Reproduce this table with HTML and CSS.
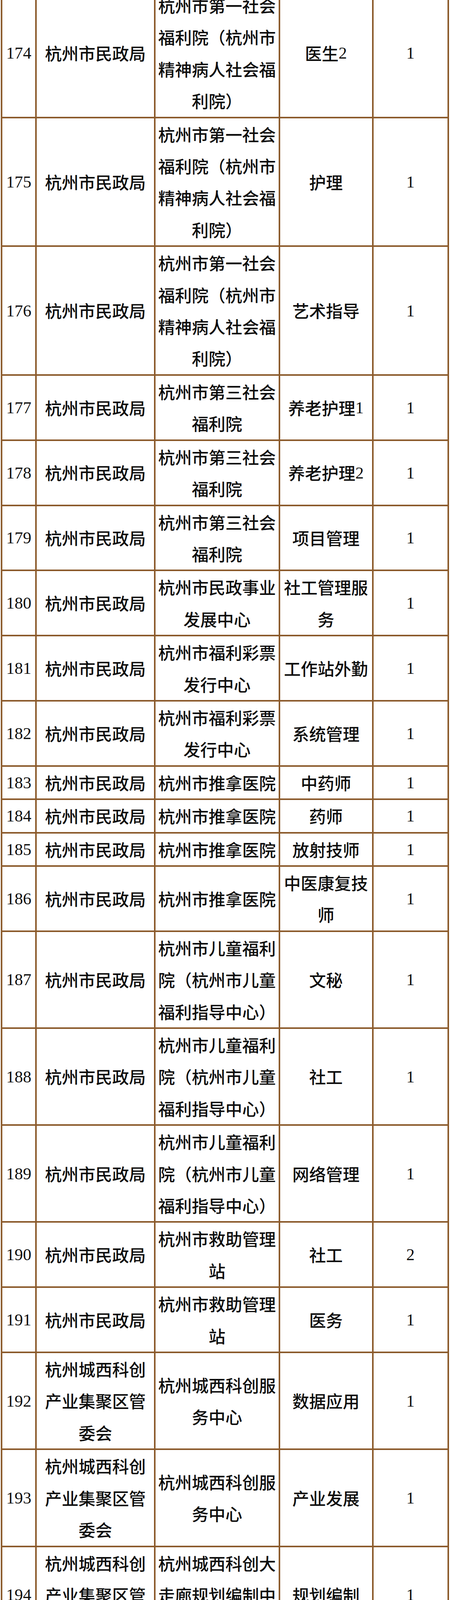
FILE: index.html
```html
<!DOCTYPE html>
<html lang="zh-CN">
<head>
<meta charset="utf-8">
<title>岗位表</title>
<link rel="stylesheet" href="styles.css">
</head>
<body>
<div class="sheet">
  <div class="c"><span class="n">174</span></div><div class="c">杭州市民政局</div><div class="c">杭州市第一社会福利院（杭州市精神病人社会福利院）</div><div class="c">医生<span class="n">2</span></div><div class="c"><span class="n">1</span></div>
  <div class="c"><span class="n">175</span></div><div class="c">杭州市民政局</div><div class="c">杭州市第一社会福利院（杭州市精神病人社会福利院）</div><div class="c">护理</div><div class="c"><span class="n">1</span></div>
  <div class="c"><span class="n">176</span></div><div class="c">杭州市民政局</div><div class="c">杭州市第一社会福利院（杭州市精神病人社会福利院）</div><div class="c">艺术指导</div><div class="c"><span class="n">1</span></div>
  <div class="c"><span class="n">177</span></div><div class="c">杭州市民政局</div><div class="c">杭州市第三社会福利院</div><div class="c">养老护理<span class="n">1</span></div><div class="c"><span class="n">1</span></div>
  <div class="c"><span class="n">178</span></div><div class="c">杭州市民政局</div><div class="c">杭州市第三社会福利院</div><div class="c">养老护理<span class="n">2</span></div><div class="c"><span class="n">1</span></div>
  <div class="c"><span class="n">179</span></div><div class="c">杭州市民政局</div><div class="c">杭州市第三社会福利院</div><div class="c">项目管理</div><div class="c"><span class="n">1</span></div>
  <div class="c"><span class="n">180</span></div><div class="c">杭州市民政局</div><div class="c">杭州市民政事业发展中心</div><div class="c">社工管理服务</div><div class="c"><span class="n">1</span></div>
  <div class="c"><span class="n">181</span></div><div class="c">杭州市民政局</div><div class="c">杭州市福利彩票发行中心</div><div class="c">工作站外勤</div><div class="c"><span class="n">1</span></div>
  <div class="c"><span class="n">182</span></div><div class="c">杭州市民政局</div><div class="c">杭州市福利彩票发行中心</div><div class="c">系统管理</div><div class="c"><span class="n">1</span></div>
  <div class="c"><span class="n">183</span></div><div class="c">杭州市民政局</div><div class="c">杭州市推拿医院</div><div class="c">中药师</div><div class="c"><span class="n">1</span></div>
  <div class="c"><span class="n">184</span></div><div class="c">杭州市民政局</div><div class="c">杭州市推拿医院</div><div class="c">药师</div><div class="c"><span class="n">1</span></div>
  <div class="c"><span class="n">185</span></div><div class="c">杭州市民政局</div><div class="c">杭州市推拿医院</div><div class="c">放射技师</div><div class="c"><span class="n">1</span></div>
  <div class="c"><span class="n">186</span></div><div class="c">杭州市民政局</div><div class="c">杭州市推拿医院</div><div class="c">中医康复技师</div><div class="c"><span class="n">1</span></div>
  <div class="c"><span class="n">187</span></div><div class="c">杭州市民政局</div><div class="c">杭州市儿童福利院（杭州市儿童福利指导中心）</div><div class="c">文秘</div><div class="c"><span class="n">1</span></div>
  <div class="c"><span class="n">188</span></div><div class="c">杭州市民政局</div><div class="c">杭州市儿童福利院（杭州市儿童福利指导中心）</div><div class="c">社工</div><div class="c"><span class="n">1</span></div>
  <div class="c"><span class="n">189</span></div><div class="c">杭州市民政局</div><div class="c">杭州市儿童福利院（杭州市儿童福利指导中心）</div><div class="c">网络管理</div><div class="c"><span class="n">1</span></div>
  <div class="c"><span class="n">190</span></div><div class="c">杭州市民政局</div><div class="c">杭州市救助管理站</div><div class="c">社工</div><div class="c"><span class="n">2</span></div>
  <div class="c"><span class="n">191</span></div><div class="c">杭州市民政局</div><div class="c">杭州市救助管理站</div><div class="c">医务</div><div class="c"><span class="n">1</span></div>
  <div class="c"><span class="n">192</span></div><div class="c">杭州城西科创产业集聚区管委会</div><div class="c">杭州城西科创服务中心</div><div class="c">数据应用</div><div class="c"><span class="n">1</span></div>
  <div class="c"><span class="n">193</span></div><div class="c">杭州城西科创产业集聚区管委会</div><div class="c">杭州城西科创服务中心</div><div class="c">产业发展</div><div class="c"><span class="n">1</span></div>
  <div class="c"><span class="n">194</span></div><div class="c">杭州城西科创产业集聚区管委会</div><div class="c">杭州城西科创大走廊规划编制中心</div><div class="c">规划编制</div><div class="c"><span class="n">1</span></div>
  <div class="c"><span class="n">195</span></div><div class="c">杭州城西科创产业集聚区管委会</div><div class="c">杭州城西科创大走廊规划编制中心</div><div class="c">建设管理</div><div class="c"><span class="n">1</span></div>
</div>
</body>
</html>
```

FILE: styles.css
```css
html, body {
  margin: 0;
  padding: 0;
  background: #fff;
}

.sheet {
  display: grid;
  grid-template-columns: 84px 300px 314.5px 235px 189.5px;
  gap: 4px;
  padding: 4px;
  width: max-content;
  margin: -31px 0 0 2px;
  background: #8b5a2b;
  font-family: "Noto Sans CJK SC", sans-serif;
  font-size: 43px;
  font-weight: 500;
  line-height: 81.4px;
  color: #0d0d0d;
}

.c {
  background: #fff;
  display: flex;
  align-items: center;
  justify-content: center;
  text-align: center;
}

.n {
  font-family: "Liberation Serif", "Times New Roman", serif;
  font-weight: 400;
  line-height: 1;
}
```
